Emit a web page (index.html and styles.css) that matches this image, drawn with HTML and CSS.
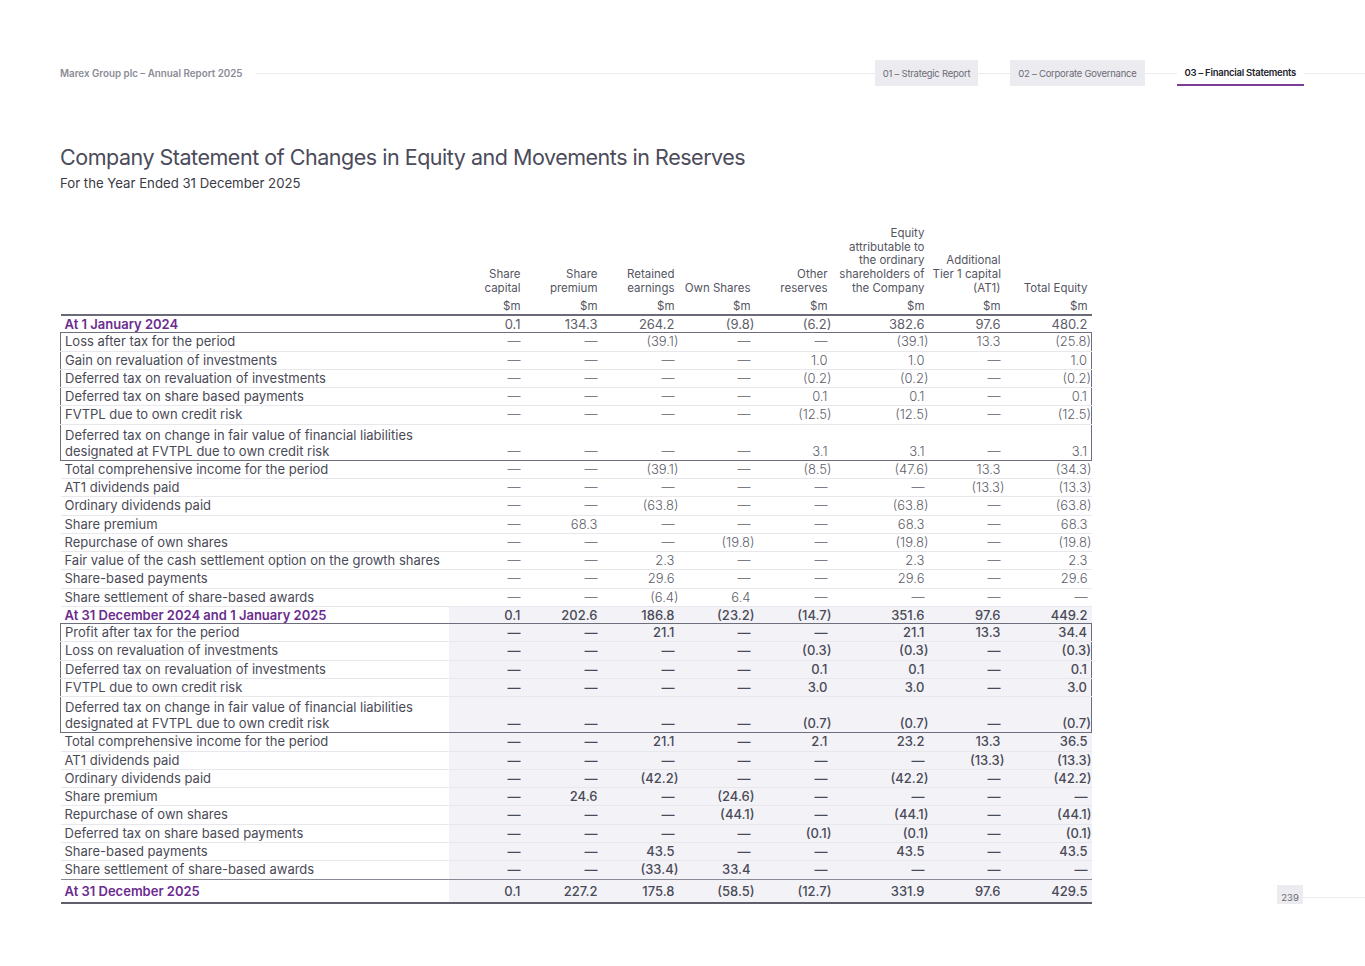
FILE: index.html
```html
<!DOCTYPE html>
<html lang="en">
<head>
<meta charset="utf-8">
<title>Company Statement of Changes in Equity</title>
<link rel="stylesheet" href="styles.css">
</head>
<body>
<div class="page">
  <header class="topbar">
    <div class="brand">Marex Group plc – Annual Report 2025</div>
    <nav class="tabs">
      <a class="tab">01 – Strategic Report</a>
      <a class="tab">02 – Corporate Governance</a>
      <a class="tab active">03 – Financial Statements</a>
    </nav>
  </header>

  <section class="heading">
    <h1>Company Statement of Changes in Equity and Movements in Reserves</h1>
    <p class="sub">For the Year Ended 31 December 2025</p>
  </section>

  <div class="body-row">
    <table class="eq">
      <colgroup>
        <col class="c-label"><col class="c76"><col class="c77"><col class="c77"><col class="c76"><col class="c77"><col class="c97"><col class="c76"><col class="c87">
      </colgroup>
      <thead>
        <tr class="hrow">
          <th class="lbl"></th>
          <th>Share<br>capital</th>
          <th>Share<br>premium</th>
          <th>Retained<br>earnings</th>
          <th>Own Shares</th>
          <th>Other<br>reserves</th>
          <th>Equity<br>attributable to<br>the ordinary<br>shareholders of<br>the Company</th>
          <th>Additional<br>Tier 1 capital<br>(AT1)</th>
          <th>Total Equity</th>
        </tr>
        <tr class="urow">
          <th class="lbl"></th>
          <th>$m</th><th>$m</th><th>$m</th><th>$m</th><th>$m</th><th>$m</th><th>$m</th><th>$m</th>
        </tr>
      </thead>

      <tbody class="open">
        <tr class="bal"><td class="lbl">At 1 January 2024</td><td>0.1</td><td>134.3</td><td>264.2</td><td><span class="ng">(9.8)</span></td><td><span class="ng">(6.2)</span></td><td>382.6</td><td>97.6</td><td>480.2</td></tr>
      </tbody>
      <tbody class="box">
        <tr><td class="lbl">Loss after tax for the period</td><td>—</td><td>—</td><td><span class="ng">(39.1)</span></td><td>—</td><td>—</td><td><span class="ng">(39.1)</span></td><td>13.3</td><td><span class="ng">(25.8)</span></td></tr>
        <tr><td class="lbl">Gain on revaluation of investments</td><td>—</td><td>—</td><td>—</td><td>—</td><td>1.0</td><td>1.0</td><td>—</td><td>1.0</td></tr>
        <tr><td class="lbl">Deferred tax on revaluation of investments</td><td>—</td><td>—</td><td>—</td><td>—</td><td><span class="ng">(0.2)</span></td><td><span class="ng">(0.2)</span></td><td>—</td><td><span class="ng">(0.2)</span></td></tr>
        <tr><td class="lbl">Deferred tax on share based payments</td><td>—</td><td>—</td><td>—</td><td>—</td><td>0.1</td><td>0.1</td><td>—</td><td>0.1</td></tr>
        <tr><td class="lbl">FVTPL due to own credit risk</td><td>—</td><td>—</td><td>—</td><td>—</td><td><span class="ng">(12.5)</span></td><td><span class="ng">(12.5)</span></td><td>—</td><td><span class="ng">(12.5)</span></td></tr>
        <tr class="two"><td class="lbl">Deferred tax on change in fair value of financial liabilities<br>designated at FVTPL due to own credit risk</td><td>—</td><td>—</td><td>—</td><td>—</td><td>3.1</td><td>3.1</td><td>—</td><td>3.1</td></tr>
      </tbody>
      <tbody class="plain">
        <tr><td class="lbl">Total comprehensive income for the period</td><td>—</td><td>—</td><td><span class="ng">(39.1)</span></td><td>—</td><td><span class="ng">(8.5)</span></td><td><span class="ng">(47.6)</span></td><td>13.3</td><td><span class="ng">(34.3)</span></td></tr>
        <tr><td class="lbl">AT1 dividends paid</td><td>—</td><td>—</td><td>—</td><td>—</td><td>—</td><td>—</td><td><span class="ng">(13.3)</span></td><td><span class="ng">(13.3)</span></td></tr>
        <tr><td class="lbl">Ordinary dividends paid</td><td>—</td><td>—</td><td><span class="ng">(63.8)</span></td><td>—</td><td>—</td><td><span class="ng">(63.8)</span></td><td>—</td><td><span class="ng">(63.8)</span></td></tr>
        <tr><td class="lbl">Share premium</td><td>—</td><td>68.3</td><td>—</td><td>—</td><td>—</td><td>68.3</td><td>—</td><td>68.3</td></tr>
        <tr><td class="lbl">Repurchase of own shares</td><td>—</td><td>—</td><td>—</td><td><span class="ng">(19.8)</span></td><td>—</td><td><span class="ng">(19.8)</span></td><td>—</td><td><span class="ng">(19.8)</span></td></tr>
        <tr><td class="lbl">Fair value of the cash settlement option on the growth shares</td><td>—</td><td>—</td><td>2.3</td><td>—</td><td>—</td><td>2.3</td><td>—</td><td>2.3</td></tr>
        <tr><td class="lbl">Share-based payments</td><td>—</td><td>—</td><td>29.6</td><td>—</td><td>—</td><td>29.6</td><td>—</td><td>29.6</td></tr>
        <tr><td class="lbl">Share settlement of share-based awards</td><td>—</td><td>—</td><td><span class="ng">(6.4)</span></td><td>6.4</td><td>—</td><td>—</td><td>—</td><td>—</td></tr>
      </tbody>

      <tbody class="open cur mid">
        <tr class="bal"><td class="lbl">At 31 December 2024 and 1 January 2025</td><td>0.1</td><td>202.6</td><td>186.8</td><td><span class="ng">(23.2)</span></td><td><span class="ng">(14.7)</span></td><td>351.6</td><td>97.6</td><td>449.2</td></tr>
      </tbody>
      <tbody class="box cur">
        <tr><td class="lbl">Profit after tax for the period</td><td>—</td><td>—</td><td>21.1</td><td>—</td><td>—</td><td>21.1</td><td>13.3</td><td>34.4</td></tr>
        <tr><td class="lbl">Loss on revaluation of investments</td><td>—</td><td>—</td><td>—</td><td>—</td><td><span class="ng">(0.3)</span></td><td><span class="ng">(0.3)</span></td><td>—</td><td><span class="ng">(0.3)</span></td></tr>
        <tr><td class="lbl">Deferred tax on revaluation of investments</td><td>—</td><td>—</td><td>—</td><td>—</td><td>0.1</td><td>0.1</td><td>—</td><td>0.1</td></tr>
        <tr><td class="lbl">FVTPL due to own credit risk</td><td>—</td><td>—</td><td>—</td><td>—</td><td>3.0</td><td>3.0</td><td>—</td><td>3.0</td></tr>
        <tr class="two"><td class="lbl">Deferred tax on change in fair value of financial liabilities<br>designated at FVTPL due to own credit risk</td><td>—</td><td>—</td><td>—</td><td>—</td><td><span class="ng">(0.7)</span></td><td><span class="ng">(0.7)</span></td><td>—</td><td><span class="ng">(0.7)</span></td></tr>
      </tbody>
      <tbody class="plain cur">
        <tr><td class="lbl">Total comprehensive income for the period</td><td>—</td><td>—</td><td>21.1</td><td>—</td><td>2.1</td><td>23.2</td><td>13.3</td><td>36.5</td></tr>
        <tr><td class="lbl">AT1 dividends paid</td><td>—</td><td>—</td><td>—</td><td>—</td><td>—</td><td>—</td><td><span class="ng">(13.3)</span></td><td><span class="ng">(13.3)</span></td></tr>
        <tr><td class="lbl">Ordinary dividends paid</td><td>—</td><td>—</td><td><span class="ng">(42.2)</span></td><td>—</td><td>—</td><td><span class="ng">(42.2)</span></td><td>—</td><td><span class="ng">(42.2)</span></td></tr>
        <tr><td class="lbl">Share premium</td><td>—</td><td>24.6</td><td>—</td><td><span class="ng">(24.6)</span></td><td>—</td><td>—</td><td>—</td><td>—</td></tr>
        <tr><td class="lbl">Repurchase of own shares</td><td>—</td><td>—</td><td>—</td><td><span class="ng">(44.1)</span></td><td>—</td><td><span class="ng">(44.1)</span></td><td>—</td><td><span class="ng">(44.1)</span></td></tr>
        <tr><td class="lbl">Deferred tax on share based payments</td><td>—</td><td>—</td><td>—</td><td>—</td><td><span class="ng">(0.1)</span></td><td><span class="ng">(0.1)</span></td><td>—</td><td><span class="ng">(0.1)</span></td></tr>
        <tr><td class="lbl">Share-based payments</td><td>—</td><td>—</td><td>43.5</td><td>—</td><td>—</td><td>43.5</td><td>—</td><td>43.5</td></tr>
        <tr><td class="lbl">Share settlement of share-based awards</td><td>—</td><td>—</td><td><span class="ng">(33.4)</span></td><td>33.4</td><td>—</td><td>—</td><td>—</td><td>—</td></tr>
      </tbody>
      <tbody class="close cur">
        <tr class="bal"><td class="lbl">At 31 December 2025</td><td>0.1</td><td>227.2</td><td>175.8</td><td><span class="ng">(58.5)</span></td><td><span class="ng">(12.7)</span></td><td>331.9</td><td>97.6</td><td>429.5</td></tr>
      </tbody>
    </table>

    <div class="pager">
      <span class="pnum">239</span>
      <span class="pline"></span>
    </div>
  </div>
</div>
</body>
</html>
```

FILE: styles.css
```css
* { box-sizing: border-box; }
html, body { margin: 0; padding: 0; background: #ffffff; }
body {
  font-family: Inter, "Noto Sans", "Liberation Sans", sans-serif;
  color: #4a4a56;
}
.page { padding: 60px 0 0 60px; }

/* top bar */
.topbar {
  display: flex;
  align-items: center;
  height: 26px;
  background: linear-gradient(#ececf0, #ececf0) no-repeat 0 13px / 100% 1px;
}
.brand {
  font-size: 9.8px;
  font-weight: 600;
  color: #8b8b95;
  background: #fff;
  padding-right: 14px;
}
.tabs {
  margin-left: auto;
  margin-right: 61px;
  display: flex;
  gap: 32px;
  height: 26px;
}
.tab {
  display: flex;
  align-items: center;
  padding: 0 8px;
  background: #ebebf0;
  font-size: 9.5px;
  color: #6b6b76;
  letter-spacing: -0.25px;
  height: 26px;
}
.tab.active {
  background: #fff;
  color: #24242c;
  font-weight: 600;
  border-bottom: 2px solid #7a3d98;
}

/* heading */
.heading { margin-top: 57px; }
h1 {
  margin: 0;
  font-size: 21.5px;
  line-height: 28px;
  font-weight: 400;
  color: #4b4b5a;
  letter-spacing: -0.48px;
}
.sub {
  margin: 3px 0 0;
  font-size: 13.2px;
  line-height: 18px;
  color: #3a3a44;
}

/* table layout */
.body-row {
  display: flex;
  align-items: flex-end;
  margin-top: 35px;
}
.eq {
  border-collapse: collapse;
  table-layout: fixed;
  width: 1031px;
  font-size: 13px;
}
.c-label { width: 388px; }
.c76 { width: 76px; }
.c77 { width: 77px; }
.c97 { width: 97px; }
.c87 { width: 87px; }

.eq th {
  font-weight: 400;
  text-align: right;
  vertical-align: bottom;
  color: #55555f;
  font-size: 11.5px;
  line-height: 13.7px;
  padding: 0 4px;
  white-space: nowrap;
}
.urow th { padding-top: 4px; padding-bottom: 1px; }
.eq thead { border-bottom: 2px solid #6b6b78; }

.eq td {
  padding: 0 4px 1px;
  line-height: 16.3px;
  text-align: right;
  white-space: nowrap;
  color: #5e5e6a;
  font-weight: 300;
  border-bottom: 1px solid #e7e7ec;
  vertical-align: bottom;
}
.eq .two td { padding-top: 2px; line-height: 16px; }
.eq td.lbl {
  text-align: left;
  color: #4a4a56;
  font-weight: 400;
}
.ng { margin-right: -4px; }

.bal td.lbl { color: #6b2c8f; font-weight: 600; }
.eq .open td { border-bottom: none; padding-top: 0; padding-bottom: 0; line-height: 16px; }
.open .bal td { font-weight: 400; }
.open .bal td.lbl { font-weight: 600; }

.box { border: 1px solid #6e6e7c; }
.box tr:last-child td { border-bottom: none; }

.mid { border-top: 1px solid #6e6e7c; }
.cur td:not(.lbl) { background: #f3f3f7; font-weight: 500; color: #4a4a58; }
.cur.open .bal td:not(.lbl) { font-weight: 500; }

.plain.cur tr:last-child td { border-bottom: none; }
.close { border-top: 1px solid #8a8a96; border-bottom: 2px solid #5f5f6c; }
.eq .close td { padding-top: 3px; padding-bottom: 3px; border-bottom: none; }

/* pager */
.pager {
  margin-left: auto;
  width: 88px;
  display: flex;
  align-items: center;
  margin-bottom: -7px;
}
.pnum {
  width: 26px;
  height: 26px;
  display: flex;
  align-items: center;
  justify-content: center;
  background: #ebebf0;
  color: #6b6b76;
  font-size: 9.5px;
}
.pline { flex: 1; height: 1px; background: #ececf0; }
```
